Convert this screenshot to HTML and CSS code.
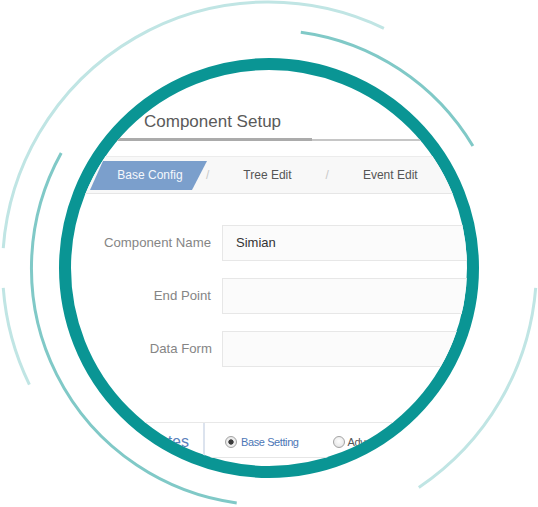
FILE: index.html
```html
<!DOCTYPE html>
<html lang="en">
<head>
<meta charset="utf-8">
<title>Component Setup</title>
<link rel="stylesheet" href="styles.css">
</head>
<body>
<div class="stage">
  <svg class="arcs" width="538" height="507" viewBox="0 0 538 507" aria-hidden="true">
    <g fill="none" stroke-width="3" stroke-linecap="butt">
      <path class="arc-light" d="M3.25 248.06 A266 266 0 0 1 383.9 28.3"/>
      <path class="arc-light" d="M29.4 384.6 A266 266 0 0 1 3.25 287.9"/>
      <path class="arc-light" d="M535.7 287.9 A266 266 0 0 1 418.8 487.5"/>
      <path class="arc-mid" d="M300.8 32.2 A238 238 0 0 1 472.9 146.1"/>
      <path class="arc-mid" d="M236.7 502.9 A237 237 0 0 1 61.2 153.1"/>
    </g>
  </svg>
  <div class="lens">
    <div class="ui">
      <div class="head"><div class="head-title">Component Setup</div></div>
      <div class="tabs">
        <div class="tab tab-active">Base Config</div>
        <span class="sep sep-first">/</span>
        <div class="tab">Tree Edit</div>
        <span class="sep">/</span>
        <div class="tab">Event Edit</div>
        <span class="sep sep-last">/</span>
      </div>
      <div class="form">
        <div class="row"><label class="label">Component Name</label><div class="input">Simian</div></div>
        <div class="row"><label class="label">End Point</label><div class="input"></div></div>
        <div class="row"><label class="label label-wide">Data Form</label><div class="input"></div></div>
      </div>
      <div class="panel">
        <div class="panel-tab">Attributes</div>
        <div class="options">
          <span class="radio radio-checked"></span><span class="opt opt-active">Base Setting</span>
          <span class="radio radio-second"></span><span class="opt">Advanced Setting</span>
        </div>
      </div>
    </div>
  </div>
</div>
</body>
</html>
```

FILE: styles.css
```css
html, body {
  margin: 0;
  padding: 0;
  background: #ffffff;
}

body {
  width: 538px;
  height: 507px;
  overflow: hidden;
  font-family: "Liberation Sans", Arial, sans-serif;
}

.stage {
  position: relative;
  width: 538px;
  height: 507px;
  box-sizing: border-box;
  padding: 58px 0 0 59px;
}

.arcs {
  position: absolute;
  left: 0;
  top: 0;
}

.arc-light {
  stroke: #c0e5e4;
}

.arc-mid {
  stroke: #80c9c7;
}

.lens {
  position: relative;
  width: 420px;
  height: 420px;
  box-sizing: border-box;
  border: 12px solid #0a9594;
  border-radius: 50%;
  overflow: hidden;
  background: #ffffff;
}

.ui {
  width: 560px;
}

/* header */
.head {
  border-bottom: 2px solid #c6c6c6;
}

.head-title {
  width: 241px;
  box-sizing: border-box;
  padding: 41px 0 5px 73px;
  margin-bottom: -2px;
  font-size: 17px;
  line-height: 22px;
  color: #5a5a5a;
  border-bottom: 3px solid #ababab;
}

/* tabs */
.tabs {
  display: flex;
  align-items: center;
  margin-top: 15px;
  padding: 4px 0 3px 19px;
  background: #f8f8f8;
  border-top: 1px solid #ececec;
  border-bottom: 1px solid #e6e6e6;
}

.tab {
  padding: 0 34px;
  font-size: 12px;
  line-height: 29px;
  color: #555555;
  white-space: nowrap;
}

.tab-active {
  width: 117px;
  height: 29px;
  box-sizing: border-box;
  padding: 0 0 0 3px;
  text-align: center;
  background: #7b9fcc;
  color: #f5f8fc;
  clip-path: polygon(13px 0, 100% 0, calc(100% - 15px) 100%, 0 100%);
}

.sep {
  font-size: 12px;
  line-height: 29px;
  color: #c9c9c9;
}

.sep-first {
  margin-left: -1px;
}

.sep-last {
  margin-left: -6px;
}

/* form */
.form {
  display: flex;
  flex-direction: column;
  gap: 17px;
  margin-top: 31px;
}

.row {
  display: flex;
  align-items: center;
}

.label {
  width: 140px;
  margin-right: 11px;
  text-align: right;
  font-size: 13.2px;
  line-height: 36px;
  color: #858585;
  white-space: nowrap;
}

.label-wide {
  width: 141px;
  margin-right: 10px;
}

.input {
  width: 400px;
  height: 36px;
  box-sizing: border-box;
  padding-left: 13px;
  border: 1px solid #e7e7e7;
  background: #fbfbfb;
  font-size: 13px;
  line-height: 34px;
  color: #333333;
}

/* bottom panel */
.panel {
  display: flex;
  height: 36px;
  box-sizing: border-box;
  margin-top: 55px;
  border-top: 1px solid #e8e8e8;
  border-bottom: 1px solid #e6e6e6;
}

.panel-tab {
  width: 134px;
  box-sizing: border-box;
  display: flex;
  align-items: center;
  justify-content: flex-end;
  padding: 3px 14px 0 0;
  border-right: 2px solid #dce3ee;
  font-size: 16px;
  color: #5a80bb;
}

.options {
  display: flex;
  align-items: center;
  padding: 3px 0 0 20px;
}

.radio {
  width: 12px;
  height: 12px;
  box-sizing: border-box;
  border: 1px solid #a3a3a3;
  border-radius: 50%;
  margin-right: 4px;
  background: radial-gradient(circle at 50% 40%, #fdfdfd 0, #ececec 60%, #d8d8d8 100%);
}

.radio-checked {
  background: radial-gradient(circle, #3a3a3a 0, #3a3a3a 2.3px, #efefef 3px, #e2e2e2 100%);
}

.radio-second {
  margin-left: 34px;
  margin-right: 3px;
}

.opt {
  font-size: 11px;
  letter-spacing: -0.4px;
  color: #555555;
  white-space: nowrap;
}

.opt-active {
  color: #4d77b6;
}
```
